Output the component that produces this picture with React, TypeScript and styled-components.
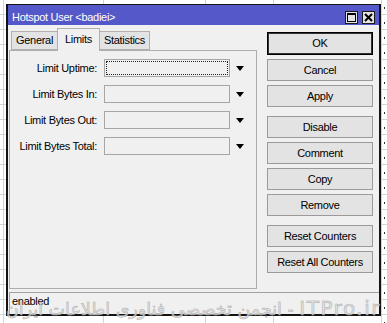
import React from "react";
import styled, { createGlobalStyle } from "styled-components";

const GlobalStyle = createGlobalStyle`
  html, body { margin: 0; padding: 0; background: #fff; }
  body { font-family: "Liberation Sans", Arial, sans-serif; }
  * { box-sizing: border-box; }
`;

const Desktop = styled.div`
  position: relative;
  width: 387px;
  height: 323px;
  overflow: hidden;
  padding: 4px 0 0 6px;
  background-color: #fff;
  background-image:
    repeating-linear-gradient(to bottom, transparent 0 7px, #333 7px 9px, transparent 9px 15px),
    linear-gradient(to right, transparent 3px, #d4d4d4 3px 4px, transparent 4px 103px, #d4d4d4 103px 104px, transparent 104px 205px, #d4d4d4 205px 206px, transparent 206px 273px, #d4d4d4 273px 274px, transparent 274px 381px, #d4d4d4 381px 382px, transparent 382px),
    repeating-linear-gradient(to bottom, transparent 0 14px, #d4d4d4 14px 15px);
  background-size: 1px 100%, 100% 100%, 100% 100%;
  background-position: 384px 0, 0 0, 0 0;
  background-repeat: no-repeat;
`;

const Window = styled.div`
  width: 375px;
  height: 312px;
  display: flex;
  flex-direction: column;
  background: #f0f0f0;
  border: 2px solid #141414;
  border-top-width: 1px;
  font-size: 11px;
  letter-spacing: -0.3px;
  line-height: 13px;
  color: #000;
`;

const TitleBar = styled.div`
  flex: none;
  height: 20px;
  display: flex;
  align-items: flex-end;
  padding: 0 4px 1px 4px;
  background: #5558c8;
  color: #fff;
`;

const Title = styled.span`
  flex: 1;
`;

const TitleButtons = styled.div`
  display: flex;
  gap: 4px;
`;

const TitleButton = styled.div`
  width: 13px;
  height: 13px;
  border: 1px solid #1a1a1a;
  background: #e4e4e4;
  display: flex;
  align-items: center;
  justify-content: center;
`;

const Body = styled.div`
  flex: 1;
  min-height: 0;
  display: flex;
  gap: 10px;
  padding: 0 6px 0 1px;
`;

const LeftColumn = styled.div`
  width: 248px;
  display: flex;
  flex-direction: column;
  padding-top: 3px;
`;

const TabStrip = styled.div`
  height: 22px;
  display: flex;
  align-items: flex-end;
  padding-left: 2px;
`;

const Tab = styled.div<{ $active?: boolean }>`
  position: relative;
  z-index: ${(p) => (p.$active ? 1 : 0)};
  height: ${(p) => (p.$active ? 23 : 19)}px;
  margin-bottom: ${(p) => (p.$active ? -1 : 0)}px;
  margin-left: -1px;
  padding: 0 ${(p) => (p.$active ? 7 : 4)}px ${(p) => (p.$active ? 2 : 0)}px;
  display: flex;
  align-items: center;
  background: ${(p) => (p.$active ? "#f0f0f0" : "#e3e3e3")};
  border: 1px solid #b0b0b0;
  border-bottom: ${(p) => (p.$active ? "none" : "1px solid #b0b0b0")};
  &:first-child { margin-left: 0; }
`;

const Panel = styled.div`
  height: 239px;
  border: 1px solid #adadad;
  background: #f0f0f0;
  display: flex;
  flex-direction: column;
  gap: 8px;
  padding-top: 8px;
`;

const FieldRow = styled.div`
  display: flex;
  align-items: center;
  height: 18px;
`;

const FieldLabel = styled.span`
  width: 87px;
  text-align: right;
  white-space: nowrap;
`;

const FieldInput = styled.div<{ $focused?: boolean }>`
  position: relative;
  width: 126px;
  height: 18px;
  margin-left: 7px;
  border: 1px solid #a6a6a6;
  background: #f0f0f0;
  &::after {
    content: "";
    display: ${(p) => (p.$focused ? "block" : "none")};
    position: absolute;
    inset: 1px;
    border: 1px dotted #222;
  }
`;

const DropArrow = styled.svg`
  margin-left: 6px;
  width: 8px;
  height: 5px;
`;

const ButtonColumn = styled.div`
  width: 106px;
  display: flex;
  flex-direction: column;
  gap: 4px;
  padding-top: 7px;
`;

const ActionButton = styled.div<{ $default?: boolean; $space?: number }>`
  height: ${(p) => (p.$default ? 23 : 22)}px;
  margin-top: ${(p) => p.$space ?? 0}px;
  display: flex;
  align-items: center;
  justify-content: center;
  white-space: nowrap;
  background: #e3e3e3;
  border: 1px solid ${(p) => (p.$default ? "#000" : "#9a9a9a")};
  box-shadow: ${(p) => (p.$default ? "inset 0 0 0 1px #333" : "none")};
`;

const StatusBar = styled.div`
  flex: none;
  height: 22px;
  margin: 3px 0 0 1px;
  padding: 2px 0 0 2px;
  border-top: 1px solid #a0a0a0;
  border-left: 1px solid #a0a0a0;
`;

const Watermark = styled.div`
  position: absolute;
  left: 0;
  right: 6px;
  top: 298px;
  white-space: nowrap;
  text-align: right;
  font-family: "DejaVu Sans", sans-serif;
  font-size: 17.5px;
  line-height: 20px;
  color: rgba(225, 225, 225, 0.75);
  -webkit-text-stroke: 0.5px #a8a8a8;
  pointer-events: none;
`;

const Brand = styled.span`
  font-size: 20px;
  letter-spacing: 1.5px;
`;

const fields = ["Limit Uptime:", "Limit Bytes In:", "Limit Bytes Out:", "Limit Bytes Total:"];

const buttons: { label: string; def?: boolean; space?: number }[] = [
  { label: "OK", def: true },
  { label: "Cancel" },
  { label: "Apply" },
  { label: "Disable", space: 5 },
  { label: "Comment" },
  { label: "Copy" },
  { label: "Remove" },
  { label: "Reset Counters", space: 5 },
  { label: "Reset All Counters" },
];

export default function App() {
  return (
    <>
      <GlobalStyle />
      <Desktop>
        <Window>
          <TitleBar>
            <Title>Hotspot User &lt;badiei&gt;</Title>
            <TitleButtons>
              <TitleButton>
                <svg width="9" height="9" viewBox="0 0 9 9">
                  <rect x="0.5" y="0.5" width="8" height="8" fill="none" stroke="#000" />
                  <rect x="0" y="0" width="9" height="2" fill="#000" />
                </svg>
              </TitleButton>
              <TitleButton>
                <svg width="9" height="9" viewBox="0 0 9 9">
                  <path d="M1 1 L8 8 M8 1 L1 8" stroke="#000" strokeWidth="2" />
                </svg>
              </TitleButton>
            </TitleButtons>
          </TitleBar>
          <Body>
            <LeftColumn>
              <TabStrip>
                <Tab>General</Tab>
                <Tab $active>Limits</Tab>
                <Tab>Statistics</Tab>
              </TabStrip>
              <Panel>
                {fields.map((f, i) => (
                  <FieldRow key={f}>
                    <FieldLabel>{f}</FieldLabel>
                    <FieldInput $focused={i === 0} />
                    <DropArrow viewBox="0 0 8 5">
                      <path d="M0 0 H8 L4 5 Z" fill="#000" />
                    </DropArrow>
                  </FieldRow>
                ))}
              </Panel>
            </LeftColumn>
            <ButtonColumn>
              {buttons.map((b) => (
                <ActionButton key={b.label} $default={b.def} $space={b.space}>
                  {b.label}
                </ActionButton>
              ))}
            </ButtonColumn>
          </Body>
          <StatusBar>enabled</StatusBar>
        </Window>
        <Watermark dir="rtl">
          <Brand>ITPro.ir</Brand> - انجمن تخصصی فناوری اطلاعات ایران
        </Watermark>
      </Desktop>
    </>
  );
}
